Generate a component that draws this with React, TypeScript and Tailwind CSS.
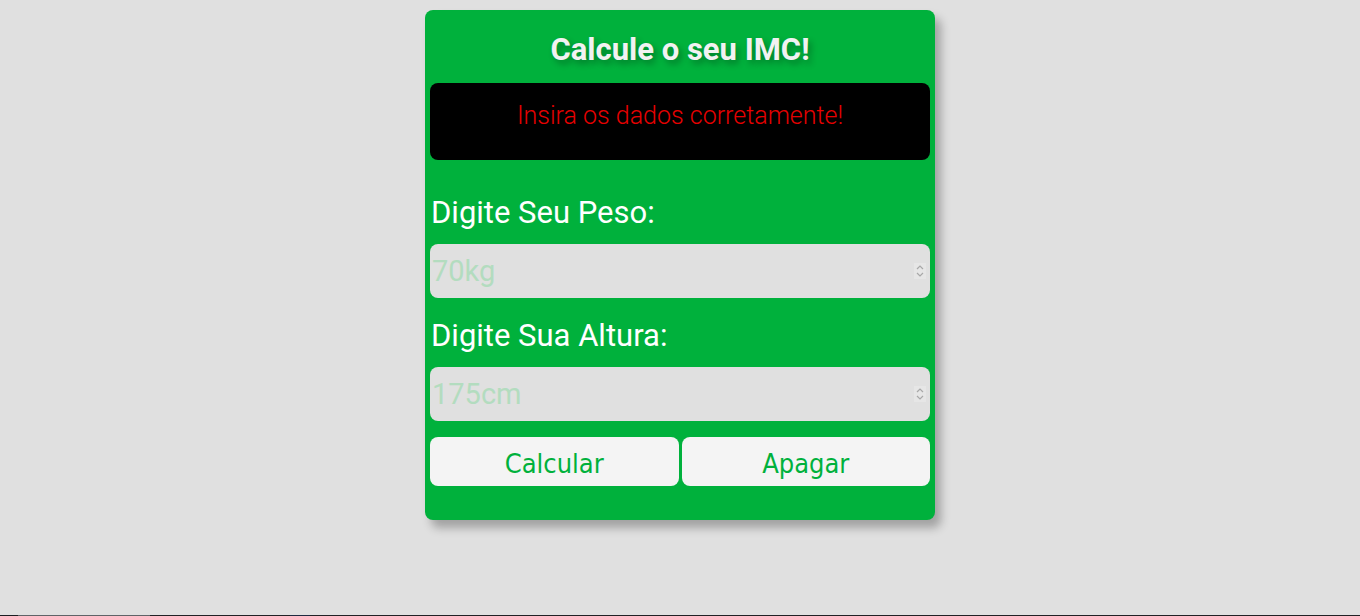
import { useState } from "react";

export default function App() {
  const [peso, setPeso] = useState("");
  const [altura, setAltura] = useState("");

  return (
    <div className="flex min-h-[616px] flex-col bg-[#e0e0e0] font-['Roboto',sans-serif]">
      <div className="flex flex-1 justify-center pt-[10px]">
        <div className="flex h-[510px] w-[510px] flex-col rounded-lg bg-[#00b13c] px-[5px] shadow-[6px_8px_10px_rgba(0,0,0,0.28)]">
          <h1 className="mt-[27px] text-center text-[31px] leading-[26px] font-bold text-[#f2f2f2] [text-shadow:3px_4px_6px_rgba(0,0,0,0.3)]">
            Calcule o seu IMC!
          </h1>
          <div className="mt-[20px] h-[77px] rounded-lg bg-black pt-[19px] text-center text-[25px] leading-[28px] font-light text-[#e60000]">
            Insira os dados corretamente!
          </div>

          <Field label="Digite Seu Peso:" placeholder="70kg" value={peso} onChange={setPeso} className="mt-[36px]" />
          <Field label="Digite Sua Altura:" placeholder="175cm" value={altura} onChange={setAltura} className="mt-[21px]" />

          <div className="mt-[16px] flex gap-[3px]">
            <button className="h-[49px] flex-1 rounded-lg bg-[#f4f4f4] pt-[5px] font-['DejaVu_Sans_Condensed','DejaVu_Sans',sans-serif] text-[27px] text-[#00b13c]">
              Calcular
            </button>
            <button className="h-[49px] flex-1 rounded-lg bg-[#f4f4f4] pt-[5px] font-['DejaVu_Sans_Condensed','DejaVu_Sans',sans-serif] text-[27px] text-[#00b13c]">
              Apagar
            </button>
          </div>
        </div>
      </div>
      <div className="flex h-px">
        <div className="w-[18px] bg-[#1b1e22]" />
        <div className="w-[132px] bg-[#5f6367]" />
        <div className="w-[140px] bg-[#202124]" />
        <div className="w-[20px] bg-[#1e2a40]" />
        <div className="flex-1 bg-[#202124]" />
      </div>
    </div>
  );
}

function Field({
  label,
  placeholder,
  value,
  onChange,
  className,
}: {
  label: string;
  placeholder: string;
  value: string;
  onChange: (v: string) => void;
  className?: string;
}) {
  return (
    <label className={`block ${className ?? ""}`}>
      <span className="block pl-px text-[31px] leading-[34px] text-white">{label}</span>
      <div className="mt-[14px] flex h-[54px] items-center rounded-lg bg-[#e0e0e0] pr-[4px]">
        <input
          value={value}
          onChange={(e) => onChange(e.target.value.replace(/[^\d.,]/g, ""))}
          placeholder={placeholder}
          inputMode="decimal"
          className="h-full min-w-0 flex-1 bg-transparent pl-[2px] text-[29px] text-[#333] outline-none placeholder:text-[#b3dcbf]"
        />
        <svg width="12" height="16" viewBox="0 0 12 16" className="bg-[#e6e6e6]">
          <path d="M3 6l3-3 3 3M3 10l3 3 3-3" fill="none" stroke="#a8a8a8" strokeWidth="1.2" />
        </svg>
      </div>
    </label>
  );
}
